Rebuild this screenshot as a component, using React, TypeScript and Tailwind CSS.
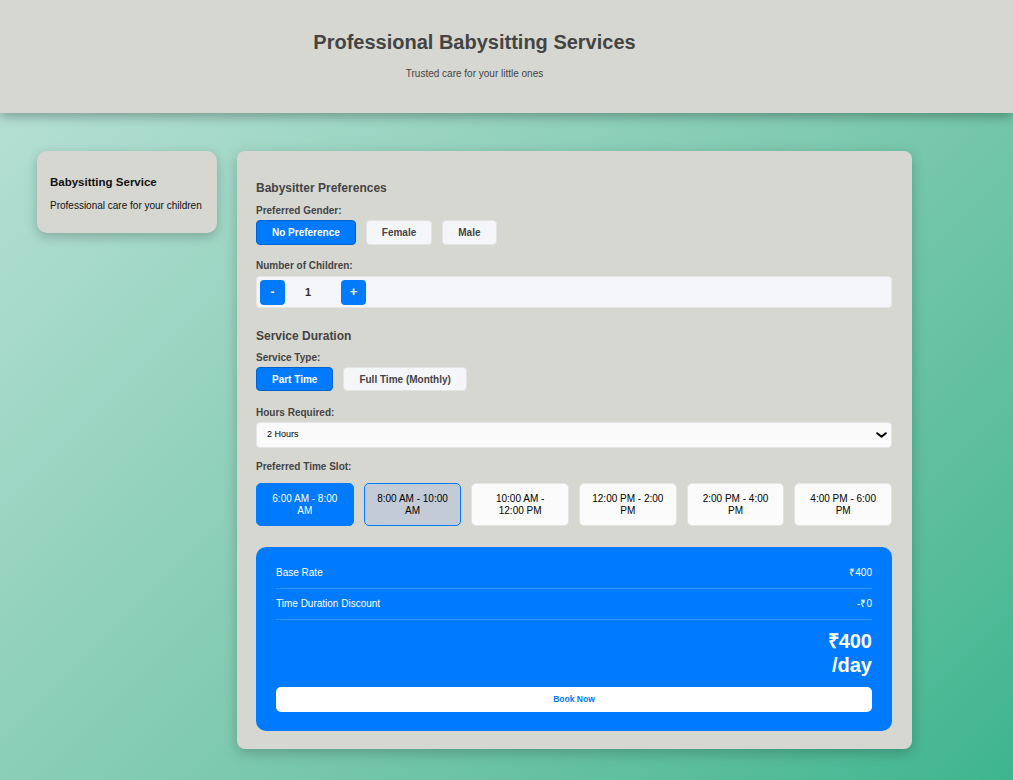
import React, { useState } from 'react';

const genders = ['No Preference', 'Female', 'Male'];
const serviceTypes = ['Part Time', 'Full Time (Monthly)'];
const slots = [
  '6:00 AM - 8:00 AM',
  '8:00 AM - 10:00 AM',
  '10:00 AM - 12:00 PM',
  '12:00 PM - 2:00 PM',
  '2:00 PM - 4:00 PM',
  '4:00 PM - 6:00 PM',
];

const App: React.FC = () => {
  const [gender, setGender] = useState('No Preference');
  const [children, setChildren] = useState(1);
  const [serviceType, setServiceType] = useState('Part Time');
  const [hours, setHours] = useState('2');
  const [slot, setSlot] = useState(0);

  const baseRate = 400;
  const discount = 0;

  return (
    <div className="min-h-screen bg-linear-135 from-[#bbe2d8] to-[#3db58f] font-['Liberation_Sans',Arial,sans-serif]">
      {/* Header */}
      <header className="relative z-10 h-[113px] bg-[#d7d7d2] pt-[31px] pr-[64px] text-center shadow-[0_4px_10px_rgba(0,0,0,0.28)]">
        <h1 className="text-[20px] leading-[23px] font-bold text-[#444]">Professional Babysitting Services</h1>
        <p className="mt-[14px] text-[10px] leading-[12px] text-[#444]">Trusted care for your little ones</p>
      </header>

      <main className="flex items-start gap-5 pl-[37px] pt-[38px] pb-[31px]">
        {/* Sidebar card */}
        <div className="w-[180px] rounded-[10px] bg-[#d7d7d2] px-[13px] pt-[24px] pb-[21px] shadow-[0_4px_12px_rgba(0,0,0,0.22)]">
          <h3 className="text-[11.5px] leading-[14px] font-bold text-[#111]">Babysitting Service</h3>
          <p className="mt-[11px] text-[10px] leading-[12px] text-[#111]">Professional care for your children</p>
        </div>

        {/* Booking card */}
        <div className="w-[675px] rounded-[8px] bg-[#d7d7d2] pl-[19px] pr-5 pt-[30px] pb-[18px] shadow-[0_4px_14px_rgba(0,0,0,0.22)]">
          <h2 className="text-[12px] leading-[14px] font-bold text-[#444]">Babysitter Preferences</h2>

          <div className="mt-[10px] text-[10px] leading-[12px] font-bold text-[#444]">Preferred Gender:</div>
          <div className="mt-[3px] flex gap-[10px]">
            {genders.map(g => (
              <button
                key={g}
                onClick={() => setGender(g)}
                className={`h-[25px] rounded-[4px] border px-[15px] text-[10px] font-bold ${
                  gender === g
                    ? 'border-[#0062cc] bg-[#007bff] text-white'
                    : 'border-[#e4e4e4] bg-[#f5f6fa] text-[#444]'
                }`}
              >
                {g}
              </button>
            ))}
          </div>

          <div className="mt-[15px] text-[10px] leading-[12px] font-bold text-[#444]">Number of Children:</div>
          <div className="mt-[4px] flex h-[32px] items-center rounded-[4px] border border-[#e6e6e6] bg-[#f5f6fa] px-[3px]">
            <button
              onClick={() => setChildren(c => Math.max(1, c - 1))}
              className="h-[25px] w-[25px] rounded-[4px] bg-[#007bff] text-[12px] font-bold text-white"
            >
              -
            </button>
            <span className="mr-[10px] w-[46px] text-center text-[11px] font-bold text-[#3a2a1a]">{children}</span>
            <button
              onClick={() => setChildren(c => c + 1)}
              className="h-[25px] w-[25px] rounded-[4px] bg-[#007bff] text-[13px] font-bold text-white"
            >
              +
            </button>
          </div>

          <h2 className="mt-[21px] text-[12px] leading-[14px] font-bold text-[#444]">Service Duration</h2>

          <div className="mt-[9px] text-[10px] leading-[12px] font-bold text-[#444]">Service Type:</div>
          <div className="mt-[3px] flex gap-[10px]">
            {serviceTypes.map(t => (
              <button
                key={t}
                onClick={() => setServiceType(t)}
                className={`h-[24px] rounded-[4px] border px-[15px] text-[10px] font-bold ${
                  serviceType === t
                    ? 'border-[#0062cc] bg-[#007bff] text-white'
                    : 'border-[#e4e4e4] bg-[#f5f6fa] text-[#444]'
                }`}
              >
                {t}
              </button>
            ))}
          </div>

          <div className="mt-[16px] text-[10px] leading-[12px] font-bold text-[#444]">Hours Required:</div>
          <div className="relative mt-[3px]">
            <select
              value={hours}
              onChange={e => setHours(e.target.value)}
              className="block h-[26px] w-full appearance-none rounded-[4px] border border-[#e6e6e6] bg-[#fafafa] pl-[10px] text-[9px] text-black outline-none"
            >
              <option value="2">2 Hours</option>
              <option value="4">4 Hours</option>
              <option value="6">6 Hours</option>
              <option value="8">8 Hours</option>
            </select>
            <svg
              className="pointer-events-none absolute right-[5px] top-[10px] h-[6px] w-[11px]"
              viewBox="0 0 11 6"
              fill="none"
            >
              <path d="M1.2 1.2 L5.5 4.8 L9.8 1.2" stroke="#000" strokeWidth="2" strokeLinecap="round" strokeLinejoin="round" />
            </svg>
          </div>

          <div className="mt-[13px] text-[10px] leading-[12px] font-bold text-[#444]">Preferred Time Slot:</div>
          <div className="mt-[10px] grid grid-cols-6 gap-[10px]">
            {slots.map((s, i) => (
              <button
                key={s}
                onClick={() => setSlot(i)}
                className={`flex h-[43px] items-center justify-center rounded-[5px] border px-[10px] text-center text-[10px] leading-[11.5px] ${
                  i === slot
                    ? 'border-[#007bff] bg-[#007bff] text-white'
                    : i === 1
                    ? 'border-[#007bff] bg-[#c2cbd6] text-black'
                    : 'border-[#e4e4e4] bg-[#fbfbfb] text-black'
                }`}
              >
                {s}
              </button>
            ))}
          </div>

          {/* Price summary */}
          <div className="mt-[21px] rounded-[10px] bg-[#007bff] px-5 pt-[11px] pb-[19px] text-white">
            <div className="flex justify-between border-b border-white/20 py-[9px] text-[10px] leading-[12px]">
              <span>Base Rate</span>
              <span>₹{baseRate}</span>
            </div>
            <div className="flex justify-between border-b border-white/20 py-[9px] text-[10px] leading-[12px]">
              <span>Time Duration Discount</span>
              <span>-₹{discount}</span>
            </div>
            <div className="pt-[9px] text-right text-[20px] leading-[24px] font-bold">
              <div>₹{baseRate - discount}</div>
              <div>/day</div>
            </div>
            <button className="mt-[10px] h-[25px] w-full rounded-[5px] bg-white text-[8.5px] font-bold text-[#007bff]">
              Book Now
            </button>
          </div>
        </div>
      </main>
    </div>
  );
};

export default App;
